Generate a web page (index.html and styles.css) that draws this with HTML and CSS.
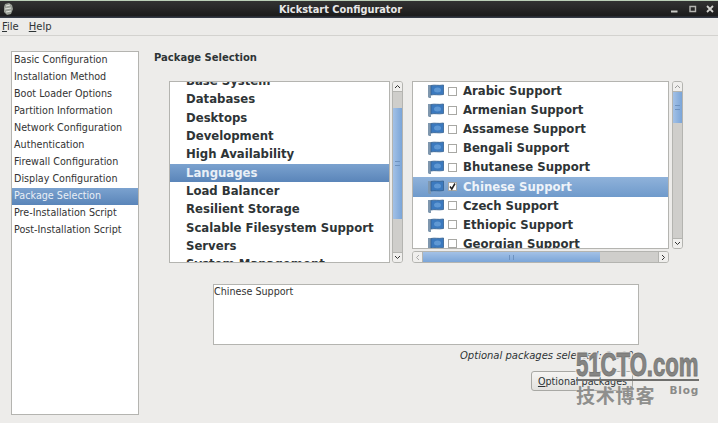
FILE: index.html
```html
<!DOCTYPE html>
<html lang="en">
<head>
<meta charset="utf-8">
<title>Kickstart Configurator</title>
<link rel="stylesheet" href="styles.css">
</head>
<body>
<div class="window">
  <header class="titlebar">
    <svg class="app-icon" width="12" height="14" viewBox="0 0 12 14"><path d="M3 2 7 1 10 3 11 7 9 12 5 13 2 10 2 5Z" fill="#9a9f96"/><path d="M4 4 8 3M3 7 9 6M4 10 9 9" stroke="#e4e6e0" stroke-width="1"/></svg>
    <span class="title">Kickstart Configurator</span>
    <div class="win-btns">
      <svg width="8" height="8" viewBox="0 0 8 8"><path d="M0 6.500H6.500" stroke="#c9c9c5" stroke-width="2"/></svg>
      <svg width="8" height="8" viewBox="0 0 8 8"><path d="M1 1.500H6.500V6.500H1Z" fill="none" stroke="#b5b5b1" stroke-width="1.400"/></svg>
      <svg width="8" height="8" viewBox="0 0 8 8"><path d="M1 1 7 7M7 1 1 7" stroke="#d2d2ce" stroke-width="1.800"/></svg>
    </div>
  </header>
  <nav class="menubar"><span><u>F</u>ile</span><span><u>H</u>elp</span></nav>
  <main class="content">
    <ul class="sidebar">
      <li>Basic Configuration</li>
      <li>Installation Method</li>
      <li>Boot Loader Options</li>
      <li>Partition Information</li>
      <li>Network Configuration</li>
      <li>Authentication</li>
      <li>Firewall Configuration</li>
      <li>Display Configuration</li>
      <li class="selected">Package Selection</li>
      <li>Pre-Installation Script</li>
      <li>Post-Installation Script</li>
    </ul>
    <section class="panel">
      <h1 class="heading">Package Selection</h1>
      <div class="lists">
        <div class="group-wrap">
          <div class="listbox groups">
            <ul class="group-list">
              <li>Base System</li>
              <li>Databases</li>
              <li>Desktops</li>
              <li>Development</li>
              <li>High Availability</li>
              <li class="selected">Languages</li>
              <li>Load Balancer</li>
              <li>Resilient Storage</li>
              <li>Scalable Filesystem Support</li>
              <li>Servers</li>
              <li>System Management</li>
            </ul>
          </div>
          <div class="vscroll">
            <div class="arrow"><svg width="7" height="5" viewBox="0 0 7 5"><path d="M1 4 3.500 1.500 6 4" fill="none" stroke="#333" stroke-width="1"/></svg></div>
            <div class="track"><div class="thumb thumb-groups"><i></i></div></div>
            <div class="arrow"><svg width="7" height="5" viewBox="0 0 7 5"><path d="M1 1 3.500 3.500 6 1" fill="none" stroke="#333" stroke-width="1"/></svg></div>
          </div>
        </div>
        <div class="pack-wrap">
          <div class="pack-top">
            <div class="listbox packs">
              <ul class="pack-list">
                <li><svg class="flag" viewBox="0 0 16 14"><use href="#flag"/></svg><span class="check"></span>Arabic Support</li>
                <li><svg class="flag" viewBox="0 0 16 14"><use href="#flag"/></svg><span class="check"></span>Armenian Support</li>
                <li><svg class="flag" viewBox="0 0 16 14"><use href="#flag"/></svg><span class="check"></span>Assamese Support</li>
                <li><svg class="flag" viewBox="0 0 16 14"><use href="#flag"/></svg><span class="check"></span>Bengali Support</li>
                <li><svg class="flag" viewBox="0 0 16 14"><use href="#flag"/></svg><span class="check"></span>Bhutanese Support</li>
                <li class="selected"><svg class="flag" viewBox="0 0 16 14"><use href="#flag"/></svg><span class="check"><svg width="9" height="9" viewBox="0 0 9 9"><path d="M2 4.500 3.800 7 7 1.500" fill="none" stroke="#222" stroke-width="1.500"/></svg></span>Chinese Support</li>
                <li><svg class="flag" viewBox="0 0 16 14"><use href="#flag"/></svg><span class="check"></span>Czech Support</li>
                <li><svg class="flag" viewBox="0 0 16 14"><use href="#flag"/></svg><span class="check"></span>Ethiopic Support</li>
                <li><svg class="flag" viewBox="0 0 16 14"><use href="#flag"/></svg><span class="check"></span>Georgian Support</li>
              </ul>
            </div>
            <div class="vscroll">
              <div class="arrow"><svg width="7" height="5" viewBox="0 0 7 5"><path d="M1 4 3.500 1.500 6 4" fill="none" stroke="#999" stroke-width="1"/></svg></div>
              <div class="track"><div class="thumb thumb-packs"><i></i></div></div>
              <div class="arrow"><svg width="7" height="5" viewBox="0 0 7 5"><path d="M1 1 3.500 3.500 6 1" fill="none" stroke="#333" stroke-width="1"/></svg></div>
            </div>
          </div>
          <div class="hscroll">
            <div class="arrow-h"><svg width="5" height="7" viewBox="0 0 5 7"><path d="M4 1 1.500 3.500 4 6" fill="none" stroke="#aaa" stroke-width="1"/></svg></div>
            <div class="track-h"><div class="thumb-h"><i></i></div></div>
            <div class="arrow-h"><svg width="5" height="7" viewBox="0 0 5 7"><path d="M1 1 3.500 3.500 1 6" fill="none" stroke="#333" stroke-width="1"/></svg></div>
          </div>
        </div>
      </div>
      <div class="descbox">Chinese Support</div>
      <p class="note">Optional packages selected: 0 of 0</p>
      <button class="btn" type="button"><u>O</u>ptional packages</button>
    </section>
  </main>
  <div class="watermark">
    <div class="wm-main">51CTO.com</div>
    <div class="wm-rule"></div>
    <div class="wm-sub"><span class="wm-cn">技术博客</span><span class="wm-blog">Blog</span></div>
  </div>
</div>
<svg width="0" height="0" class="defs"><defs><g id="flag"><path d="M0 1H3V14H1L0 13Z" fill="#7f97ae"/><path d="M3 1.500C7 0.500 10 2 15.500 1V10.500C10 11.500 7 10 3 11Z" fill="#3b79be" stroke="#35618f" stroke-width="0.800"/><ellipse cx="9.500" cy="6" rx="3.500" ry="2.500" fill="#5f98d4"/></g></defs></svg>
</body>
</html>
```

FILE: styles.css
```css
* { box-sizing: border-box; }
html, body { margin: 0; padding: 0; }
body { width: 718px; height: 423px; overflow: hidden; background: #edecea; font-family: "DejaVu Sans", sans-serif; color: #2e3436; }
ul { list-style: none; margin: 0; padding: 0; }

.window { position: relative; width: 718px; height: 423px; display: flex; flex-direction: column; }

.titlebar { height: 18px; flex: none; display: flex; align-items: center; justify-content: center; position: relative; background: linear-gradient(#333 0, #2b2b2b 30%, #1c1c1c 85%, #3a4250 100%); border-top: 1px solid #bcd0b8; }
.app-icon { position: absolute; left: 2px; top: 1px; }
.title { color: #e8e8e8; font-size: 9.800px; font-weight: bold; margin-right: 37px; }
.win-btns { position: absolute; left: 671px; top: 4px; display: flex; gap: 9.500px; }

.menubar { height: 18px; flex: none; display: flex; gap: 10px; padding: 0 2px; align-items: center; font-size: 10px; background: #ecebe9; border-bottom: 1px solid #d3d2cf; color: #2e3436; }

.content { flex: 1; display: flex; padding: 15px 0 8px 11px; }

.sidebar { width: 128px; height: 364px; flex: none; background: #fff; border: 1px solid #b4b4b0; font-size: 9.600px; color: #333; }
.sidebar li { height: 16.960px; line-height: 16px; padding-left: 2px; white-space: nowrap; }
.sidebar li.selected { background: linear-gradient(#7ba2cf, #5a85b9); color: #e9eff6; }

.panel { position: relative; flex: 1; display: flex; flex-direction: column; padding-left: 15px; }
.heading { margin: 1px 0 0; font-size: 10px; line-height: 12px; font-weight: bold; color: #2e3436; }

.lists { display: flex; margin: 17px 0 0 15px; }
.group-wrap { display: flex; width: 234px; gap: 2px; height: 182px; margin-right: 9px; }
.listbox { background: #fff; border: 1px solid #b4b4b0; overflow: hidden; font-weight: bold; font-size: 11.700px; color: #2e3436; }
.groups { width: 221px; height: 182px; }
.group-list { margin-top: -10px; }
.group-list li { height: 18.350px; line-height: 18px; padding-left: 16px; white-space: nowrap; }
.group-list li.selected { background: linear-gradient(#7ba2cf, #5a85b9); color: #e9eff6; }
.pack-list li.selected { background: linear-gradient(#8fb2da, #6f9acb); color: #eef3f9; }

.vscroll { width: 11px; flex: none; display: flex; flex-direction: column; border: 1px solid #b4b4b0; border-radius: 3px; overflow: hidden; }
.arrow { height: 10px; flex: none; background: #f0efed; border-bottom: 1px solid #b4b4b0; display: flex; align-items: center; justify-content: center; }
.vscroll .arrow:last-child { border-bottom: 0; border-top: 1px solid #b4b4b0; }
.track { flex: 1; background: #cfcecb; display: flex; flex-direction: column; }
.thumb { background: linear-gradient(90deg, #a3c1e6, #7ba5d8); display: flex; align-items: center; justify-content: center; }
.thumb i { width: 5px; height: 5px; border-top: 1px solid #6d92c0; border-bottom: 1px solid #6d92c0; }
.thumb-groups { height: 111px; margin-top: 16px; }
.thumb-packs { height: 31px; }

.pack-wrap { width: 271px; display: flex; flex-direction: column; }
.pack-top { display: flex; gap: 3px; height: 168px; }
.packs { width: 257px; height: 168px; }
.pack-list li { height: 19.100px; display: flex; align-items: center; white-space: nowrap; padding: 0 0 1px 15px; }
.flag { width: 16px; height: 14px; flex: none; margin-right: 4px; }
.check { width: 9px; height: 9px; flex: none; background: #fff; border: 1px solid #a8a8a4; margin-right: 6px; display: flex; align-items: center; justify-content: center; }
.check svg { flex: none; }

.hscroll { width: 257px; height: 12px; margin-top: 2px; display: flex; border: 1px solid #b4b4b0; border-radius: 3px; overflow: hidden; }
.arrow-h { width: 10px; flex: none; background: #f0efed; border-right: 1px solid #b4b4b0; display: flex; align-items: center; justify-content: center; }
.hscroll .arrow-h:last-child { border-right: 0; border-left: 1px solid #b4b4b0; }
.track-h { flex: 1; background: #cfcecb; }
.thumb-h { width: 177px; height: 100%; background: linear-gradient(#a3c1e6, #7ba5d8); display: flex; align-items: center; justify-content: center; }
.thumb-h i { width: 5px; height: 5px; border-left: 1px solid #6d92c0; border-right: 1px solid #6d92c0; }

.descbox { width: 426px; height: 61px; margin: 21px 0 0 59px; background: #fff; border: 1px solid #b4b4b0; font-size: 9.600px; line-height: 13px; color: #333; }
.note { margin: 4px 0 0 306px; font-size: 10px; line-height: 13px; font-style: italic; white-space: nowrap; color: #2e3436; }
.btn { width: 102px; height: 20px; margin: 9px 0 0 377px; padding: 0 0 0 1px; background: linear-gradient(#f5f4f2, #e3e2df); border: 1px solid #a8a8a4; border-radius: 3px; font-family: "DejaVu Sans", sans-serif; font-size: 9.600px; color: #2e3436; white-space: nowrap; }

.watermark { position: absolute; left: 576px; top: 347px; width: 123px; color: #7d7d7b; }
.wm-main { font-family: "Liberation Sans", sans-serif; font-weight: bold; font-size: 34px; line-height: 34px; width: 190px; transform: scaleX(0.650); transform-origin: left top; white-space: nowrap; color: #858583; -webkit-text-stroke: 1px #767674; text-shadow: 0 0 3px #edecea, 2px 0 2px #edecea, -2px 0 2px #edecea, 0 2px 2px #edecea, 0 -2px 2px #edecea; }
.wm-rule { height: 2px; background: #6f6f6d; margin-top: -2px; }
.wm-sub { display: flex; justify-content: space-between; align-items: flex-start; margin-top: 3px; }
.wm-cn { font-family: "Noto Sans CJK SC", sans-serif; font-size: 19px; line-height: 21px; letter-spacing: 0.800px; color: #8f8f8d; font-weight: bold; text-shadow: 0 0 2px #edecea; }
.wm-blog { font-family: "DejaVu Sans", sans-serif; font-size: 10.500px; line-height: 13px; letter-spacing: 0.800px; font-weight: bold; color: #8a8a88; }
.defs { position: absolute; }
```
